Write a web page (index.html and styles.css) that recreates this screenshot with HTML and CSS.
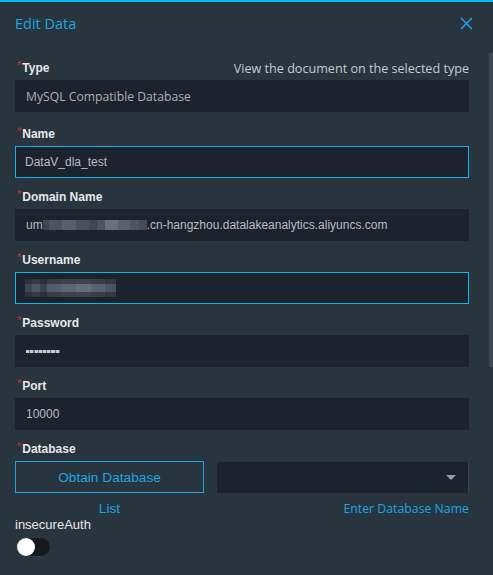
FILE: index.html
```html
<!DOCTYPE html>
<html lang="en">
<head>
<meta charset="utf-8">
<title>Edit Data</title>
<link rel="stylesheet" href="styles.css">
</head>
<body>
<div class="dialog">
  <header class="header">
    <h1 class="title">Edit Data</h1>
    <svg class="close" width="13" height="13" viewBox="0 0 13 13" aria-label="Close">
      <path d="M1 1 L12 12 M12 1 L1 12" stroke="#1aa6e0" stroke-width="1.5" fill="none"/>
    </svg>
  </header>
  <div class="body">
    <div class="group group-first">
      <div class="label-row">
        <label class="label"><span class="req">*</span>Type</label>
        <span class="doc-link">View the document on the selected type</span>
      </div>
      <div class="input input-type">MySQL Compatible Database</div>
    </div>
    <div class="group">
      <div class="label-row"><label class="label"><span class="req">*</span>Name</label></div>
      <div class="input focus">DataV_dla_test</div>
    </div>
    <div class="group">
      <div class="label-row"><label class="label"><span class="req">*</span>Domain Name</label></div>
      <div class="input">um<span class="mosaic mosaic-domain"></span>.cn-hangzhou.datalakeanalytics.aliyuncs.com</div>
    </div>
    <div class="group">
      <div class="label-row"><label class="label"><span class="req">*</span>Username</label></div>
      <div class="input focus"><span class="mosaic mosaic-user"></span></div>
    </div>
    <div class="group">
      <div class="label-row"><label class="label"><span class="req">*</span>Password</label></div>
      <div class="input"><span class="pwd-dots"></span></div>
    </div>
    <div class="group">
      <div class="label-row"><label class="label"><span class="req">*</span>Port</label></div>
      <div class="input">10000</div>
    </div>
    <div class="group group-db">
      <div class="label-row"><label class="label"><span class="req">*</span>Database</label></div>
      <div class="db-row">
        <button class="obtain">Obtain Database</button>
        <div class="select"><span class="caret"></span></div>
      </div>
      <div class="db-help">
        <span class="list-text">List</span>
        <span class="enter-link">Enter Database Name</span>
      </div>
    </div>
    <div class="switch-label">insecureAuth</div>
    <div class="switch"><span class="knob"></span></div>
  </div>
  <div class="scroll-thumb"></div>
</div>
</body>
</html>
```

FILE: styles.css
```css
* { box-sizing: border-box; }
html, body { margin: 0; padding: 0; }
body {
  background: #28343e;
  font-family: "Liberation Sans", Arial, sans-serif;
  width: 493px;
  height: 575px;
  overflow: hidden;
}
.dialog {
  position: relative;
  width: 493px;
  height: 575px;
  background: #28343e;
  border-top: 2px solid #00bff0;
}
.header {
  height: 42px;
  display: flex;
  align-items: center;
  justify-content: space-between;
  padding: 0 20px 0 15px;
}
.title {
  margin: 0;
  font-family: "Open Sans", sans-serif;
  font-weight: 400;
  font-size: 14.5px;
  color: #1aa6e0;
}
.close { display: block; }
.body {
  padding: 15px 24px 0 15px;
}
.group { margin-bottom: 10px; }
.group-first { margin-bottom: 13px; }
.label-row {
  height: 18px;
  margin-bottom: 3px;
  display: flex;
  align-items: center;
  justify-content: space-between;
}
.label {
  font-weight: 700;
  font-size: 12px;
  color: #e6e8ea;
  padding-left: 2px;
}
.req {
  color: #e0262b;
  font-weight: 400;
  font-size: 11px;
  position: relative;
  top: -3px;
  margin-right: 1px;
}
.doc-link {
  font-family: "Open Sans", sans-serif;
  font-size: 12.6px;
  color: #c4cad0;
}
.input {
  height: 32px;
  background: #1d232c;
  border: 1px solid #1d232c;
  padding: 0 10px;
  display: flex;
  align-items: center;
  font-size: 12px;
  color: #b6bcc2;
  white-space: nowrap;
}
.input.focus { border-color: #12b4ee; padding-left: 9px; }
.input-type {
  font-family: "Open Sans", sans-serif;
  font-size: 12.2px;
  color: #aab0b6;
}
.mosaic { display: inline-block; }
.mosaic-domain {
  width: 104px;
  height: 10px;
  background: linear-gradient(90deg,
    #3e4650 0 6%, #4c535d 6% 18%, #59606a 18% 32%, #4a515b 32% 44%,
    #3f4751 44% 52%, #4e555f 52% 60%, #6a7079 60% 72%, #5b626b 72% 84%,
    #4f565f 84% 92%, #444c56 92% 100%);
}
.mosaic-user {
  width: 91px;
  height: 18px;
  background:
    linear-gradient(180deg, rgba(29,35,44,0.55) 0 30%, rgba(29,35,44,0) 30% 72%, rgba(29,35,44,0.55) 72% 100%),
    linear-gradient(90deg,
      #3d4550 0 8%, #4e555f 8% 16%, #3b434d 16% 24%, #565d67 24% 40%,
      #5f666f 40% 56%, #676d76 56% 72%, #5a616a 72% 88%, #4d545e 88% 100%);
}
.pwd-dots {
  display: inline-block;
  width: 34px;
  height: 3px;
  background: repeating-linear-gradient(90deg, #c6cace 0 3px, #6d747c 3px 4.25px);
}
.db-row {
  display: grid;
  grid-template-columns: 189px 1fr;
  column-gap: 13px;
}
.obtain {
  height: 32px;
  margin: 0;
  background: transparent;
  border: 1px solid #1aa6e0;
  color: #1aa6e0;
  font-family: "Liberation Sans", Arial, sans-serif;
  font-size: 13.7px;
  padding: 0;
}
.select {
  height: 31px;
  margin-top: 1px;
  background: #1d232c;
  border-right: 1px solid #3a4550;
  display: flex;
  align-items: center;
  justify-content: flex-end;
  padding-right: 12px;
}
.caret {
  width: 0;
  height: 0;
  border-left: 5px solid transparent;
  border-right: 5px solid transparent;
  border-top: 5px solid #9a9ea3;
}
.db-help {
  margin-top: 8px;
  height: 16px;
  display: grid;
  grid-template-columns: 189px 1fr;
  column-gap: 13px;
  align-items: center;
  line-height: 16px;
}
.list-text {
  text-align: center;
  color: #1aa6e0;
  font-size: 13.7px;
}
.enter-link {
  text-align: right;
  color: #1aa6e0;
  font-family: "Open Sans", sans-serif;
  font-size: 12.3px;
}
.group-db { margin-bottom: 0; }
.switch-label {
  height: 16px;
  line-height: 16px;
  font-size: 13px;
  color: #e6e8ea;
}
.switch {
  margin-top: 4px;
  margin-left: 1px;
  width: 35px;
  height: 20px;
  border-radius: 10px;
  background: #16191e;
  border: 1px solid #303a44;
  position: relative;
}
.knob {
  position: absolute;
  left: 0;
  top: 0;
  width: 18px;
  height: 18px;
  border-radius: 50%;
  background: #ffffff;
}
.scroll-thumb {
  position: absolute;
  right: 0;
  top: 51px;
  width: 4px;
  height: 314px;
  background: #3c4853;
}
```
